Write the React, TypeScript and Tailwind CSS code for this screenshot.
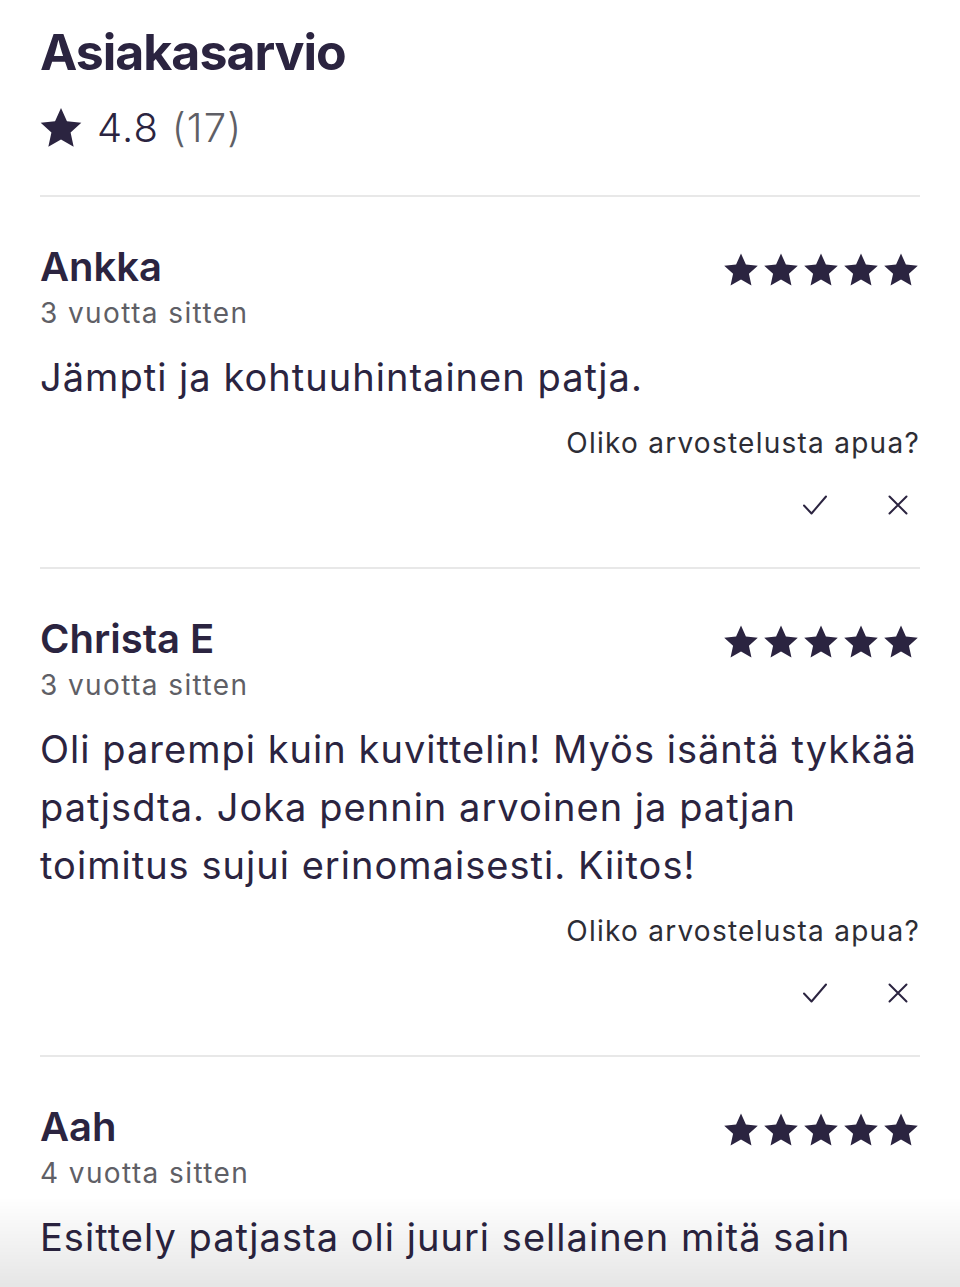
import React from 'react';

interface Review {
  name: string;
  date: string;
  lines: string[];
}

// rivit katkaistu kuten kuvakaappauksessa
const reviews: Review[] = [
  { name: 'Ankka', date: '3 vuotta sitten', lines: ['Jämpti ja kohtuuhintainen patja.'] },
  {
    name: 'Christa E',
    date: '3 vuotta sitten',
    lines: [
      'Oli parempi kuin kuvittelin! Myös isäntä tykkää',
      'patjsdta. Joka pennin arvoinen ja patjan',
      'toimitus sujui erinomaisesti. Kiitos!',
    ],
  },
  { name: 'Aah', date: '4 vuotta sitten', lines: ['Esittely patjasta oli juuri sellainen mitä sain'] },
];

const StarIcon = ({ className }: { className?: string }) => (
  <svg viewBox="0 0 24 24" className={className} fill="currentColor">
    <path d="M12 1.6l3.1 6.9 7.5.8-5.6 5.1 1.6 7.4L12 18l-6.6 3.8L7 14.4 1.4 9.3l7.5-.8z" />
  </svg>
);

const CheckIcon = () => (
  <svg viewBox="0 0 24 20" className="w-[24px] h-[20px]" fill="none" stroke="currentColor" strokeWidth={2} strokeLinecap="round" strokeLinejoin="round">
    <path d="M1 10.5 8.5 18.5 23 1.5" />
  </svg>
);

const CrossIcon = () => (
  <svg viewBox="0 0 20 20" className="w-[20px] h-[20px]" fill="none" stroke="currentColor" strokeWidth={2} strokeLinecap="round">
    <path d="M1.5 1.5l17 17M18.5 1.5l-17 17" />
  </svg>
);

const ReviewItem = ({ review }: { review: Review }) => (
  <div className="border-t-2 border-[#e8e8e8] pt-[48px] pb-[52px]">
    <div className="flex justify-between items-start">
      <div>
        <div className="text-[40px] leading-[44px] font-semibold">{review.name}</div>
        <div className="mt-[8px] text-[28px] leading-[32px] tracking-[0.05em] text-[#5f5f66]">{review.date}</div>
      </div>
      <div className="flex gap-[2px] mt-[6px]">
        {[0, 1, 2, 3, 4].map((i) => (
          <StarIcon key={i} className="w-[38px] h-[38px]" />
        ))}
      </div>
    </div>
    <div className="mt-[19px] text-[38px] leading-[58px] tracking-[0.027em]">
      {review.lines.map((line) => (
        <div key={line} className="whitespace-nowrap">{line}</div>
      ))}
    </div>
    <div className="mt-[19px] text-right text-[28px] leading-[36px] tracking-[0.045em] text-[#2d2d35]">Oliko arvostelusta apua?</div>
    <div className="mt-[34px] flex justify-end items-center gap-[61px] pr-[12px]">
      <CheckIcon />
      <CrossIcon />
    </div>
  </div>
);

export default function App() {
  return (
    <div className="h-screen overflow-hidden bg-white text-[#2b2440] px-[40px] pt-[22px]" style={{ fontFamily: 'Inter, "Noto Sans", sans-serif' }}>
      <h1 className="text-[50px] leading-[60px] font-bold tracking-[-1px]">Asiakasarvio</h1>
      <div className="mt-[22px] flex items-center gap-[13px] h-[48px]">
        <StarIcon className="w-[46px] h-[46px] -ml-[2px]" />
        <span className="text-[40px] font-light tracking-[0.03em]">
          4.8 <span className="text-[#5f5f66]">(17)</span>
        </span>
      </div>
      <div className="mt-[43px]">
        {reviews.map((r) => (
          <ReviewItem key={r.name} review={r} />
        ))}
      </div>
      <div className="fixed inset-x-0 bottom-0 h-[90px] pointer-events-none bg-gradient-to-b from-transparent to-black/10" />
    </div>
  );
}
